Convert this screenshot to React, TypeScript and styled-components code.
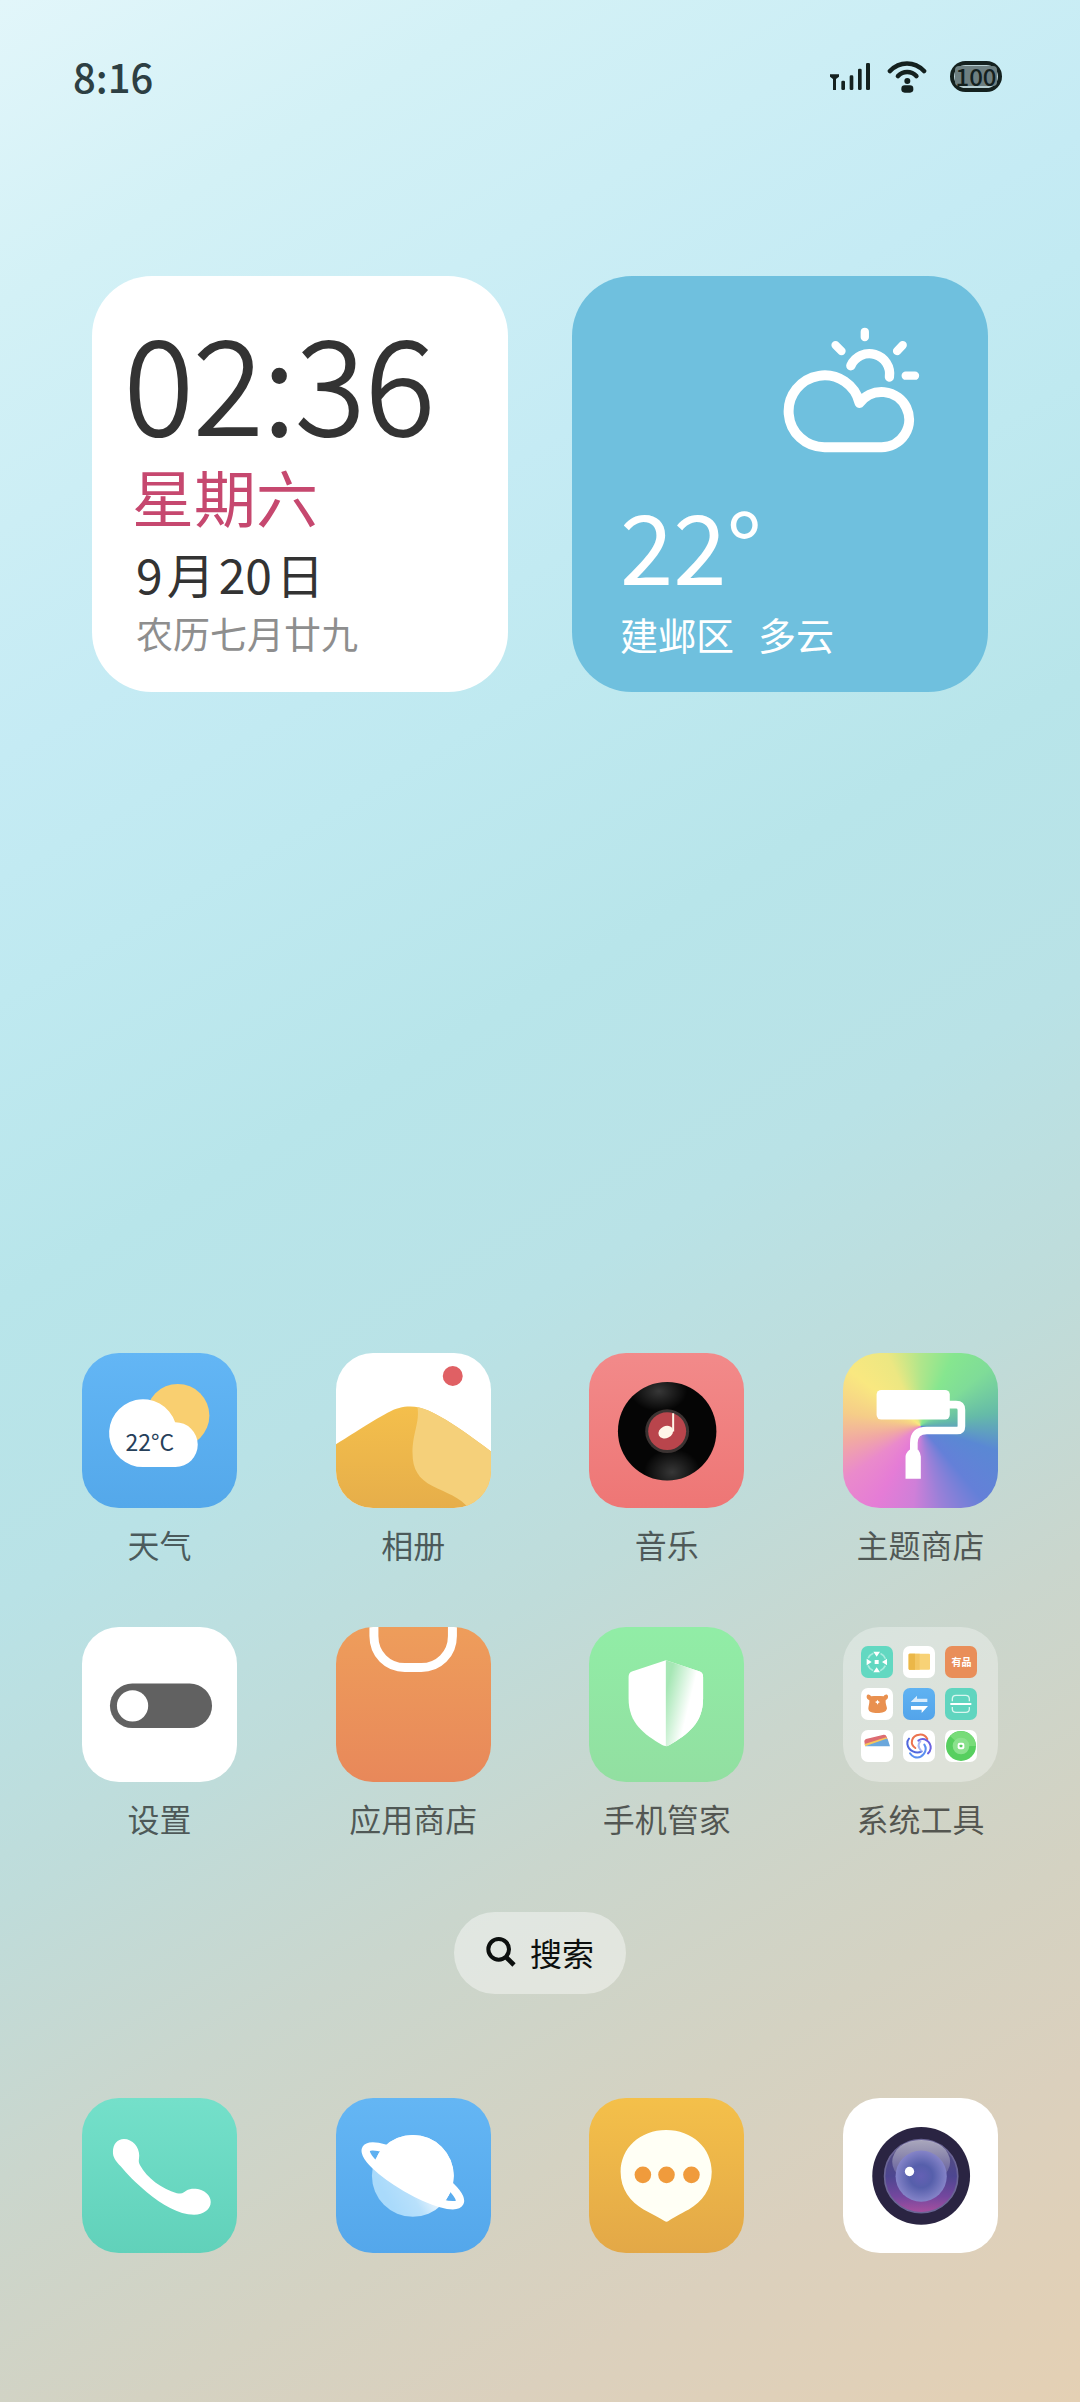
import React from 'react';
import styled, { createGlobalStyle } from 'styled-components';

interface AppEntry {
  id: string;
  name: string;
  background: string;
  icon: React.ReactNode;
}

const GlobalStyle = createGlobalStyle`
  * {
    box-sizing: border-box;
  }

  body {
    margin: 0;
    font-family: 'Noto Sans CJK SC', 'Noto Sans', sans-serif;
  }

  button {
    font: inherit;
    color: inherit;
    border: none;
    background: none;
    padding: 0;
    cursor: pointer;
  }

  svg {
    display: block;
  }
`;

const Screen = styled.div`
  display: flex;
  flex-direction: column;
  min-height: 100vh;
  padding-bottom: 149px;
  background: linear-gradient(
    150deg,
    #e2f6fa 0%,
    #d3f1f6 10%,
    #c5ebf4 25%,
    #bfe9f0 33%,
    #b8e5ea 43%,
    #b9e2e6 53%,
    #bfdcda 63%,
    #cad6cd 72%,
    #d4d2c2 82%,
    #dbd0bd 89%,
    #e4d0b4 100%
  );
`;

const StatusBar = styled.header`
  display: flex;
  align-items: center;
  justify-content: space-between;
  height: 152px;
  padding: 0 78px 0 73px;
  color: #2d3f43;
`;

const StatusTime = styled.span`
  font-size: 40px;
  line-height: 48px;
  font-weight: 500;
`;

const StatusIcons = styled.div`
  display: flex;
  align-items: center;
  gap: 17px;
`;

const Battery = styled.span`
  display: flex;
  align-items: center;
  justify-content: center;
  width: 52px;
  height: 31px;
  margin-left: 6px;
  border: 4px solid #14211f;
  border-radius: 16px;
  background: #b5cdd1;
`;

const BatteryLevel = styled.span`
  border-radius: 4px;
  background: #6d7f81;
  color: #14211f;
  font-size: 24px;
  line-height: 20px;
  font-weight: 500;
`;

const Widgets = styled.section`
  display: grid;
  grid-template-columns: 1fr 1fr;
  gap: 64px;
  padding: 124px 92px 0;
`;

const Widget = styled.article<{ $background: string }>`
  display: flex;
  flex-direction: column;
  aspect-ratio: 1;
  border-radius: 60px;
  overflow: hidden;
  background: ${props => props.$background};
`;

const ClockWidget = styled(Widget)`
  padding: 38px 32px 32px;
  color: #333;
`;

const Clock = styled.div`
  font-size: 130px;
  line-height: 128px;
  font-weight: 300;
  -webkit-text-stroke: 2px #333;
`;

const DateBlock = styled.div`
  display: flex;
  flex-direction: column;
  margin-top: 22px;
  padding-left: 8px;
`;

const Weekday = styled.span`
  font-size: 62px;
  line-height: 64px;
  color: #c6486f;
`;

const MonthDay = styled.span`
  display: flex;
  gap: 4px;
  margin: 17px 0 0 4px;
  font-size: 48px;
  line-height: 56px;
`;

const Lunar = styled.span`
  margin: 8px 0 0 4px;
  font-size: 37px;
  line-height: 48px;
  color: #8e8e8e;
`;

const WeatherWidget = styled(Widget)`
  padding: 51px 68px 34px 48px;
  color: #fff;

  svg {
    align-self: flex-end;
  }
`;

const Temperature = styled.span`
  margin-top: auto;
  font-size: 96px;
  line-height: 96px;
`;

const Place = styled.div`
  display: flex;
  gap: 24px;
  margin-top: 18px;
  font-size: 38px;
  line-height: 48px;
`;

const AppGrid = styled.main`
  display: grid;
  grid-template-columns: repeat(4, 155px);
  justify-content: space-between;
  row-gap: 63px;
  margin-top: auto;
  padding: 0 82px;
`;

const AppButton = styled.button`
  display: flex;
  flex-direction: column;
  align-items: center;
  gap: 16px;
`;

const AppTile = styled.span<{ $background: string }>`
  display: flex;
  align-items: center;
  justify-content: center;
  width: 155px;
  height: 155px;
  border-radius: 37px;
  overflow: hidden;
  background: ${props => props.$background};
`;

const AppLabel = styled.span`
  font-size: 32px;
  line-height: 40px;
  white-space: nowrap;
  color: rgba(0, 0, 0, 0.6);
`;

const FolderGrid = styled.span`
  display: grid;
  grid-template-columns: repeat(3, 32px);
  gap: 10px;
  padding: 0 2px 2px 0;
`;

const MiniTile = styled.span<{ $background: string }>`
  display: flex;
  align-items: center;
  justify-content: center;
  height: 32px;
  border-radius: 7px;
  overflow: hidden;
  background: ${props => props.$background};
  color: #fff;
  font-size: 10px;
  line-height: 12px;
  font-weight: 700;
`;

const SearchButton = styled.button`
  display: flex;
  align-items: center;
  align-self: center;
  gap: 14px;
  height: 82px;
  margin-top: 74px;
  padding: 0 32px 2px;
  border-radius: 41px;
  background: rgba(255, 255, 255, 0.42);
  color: #0c0f0e;
  font-size: 32px;
  line-height: 40px;
`;

const Dock = styled.nav`
  display: flex;
  justify-content: space-between;
  margin-top: 104px;
  padding: 0 82px;
`;

const SignalIcon = () => (
  <svg width="40" height="32" viewBox="0 0 120 96" fill="#14211f">
    <path d="M0 43H27V50L18 57V90H9V57L0 50Z" />
    <rect x="34" y="62" width="11" height="28" rx="4" />
    <rect x="59" y="46" width="11" height="44" rx="4" />
    <rect x="84" y="26" width="11" height="64" rx="4" />
    <rect x="108" y="9" width="12" height="81" rx="4" />
  </svg>
);

const WifiIcon = () => (
  <svg width="40" height="33" viewBox="0 0 120 99" fill="none" stroke="#14211f" strokeLinecap="round">
    <path d="M9 33C38 3 82 3 111 33" strokeWidth="14" />
    <path d="M33 48C48 32 73 32 88 48" strokeWidth="14" />
    <circle cx="61" cy="63" r="9" fill="#14211f" stroke="none" />
    <rect x="43" y="76" width="36" height="22" rx="10" fill="#14211f" stroke="none" />
  </svg>
);

const PartlyCloudyIcon = () => (
  <svg width="137" height="126" viewBox="0 0 412 378" fill="none" stroke="#fff" strokeLinecap="round" strokeLinejoin="round">
    <path d="M125 361A108 108 0 1 1 230 228A83 83 0 1 1 295 361Z" strokeWidth="30" />
    <path d="M204 116A61 61 0 0 1 320 150" strokeWidth="28" />
    <path d="M246 14V30M158 54L176 72M360 54L343 72M369 146H397" strokeWidth="25" />
  </svg>
);

const SearchIcon = () => (
  <svg width="30" height="30" viewBox="0 0 90 90" fill="none" stroke="currentColor" strokeWidth="12">
    <circle cx="38" cy="37" r="31" />
    <path d="M60 60L84 84" strokeWidth="14" />
  </svg>
);

const WeatherIcon = () => (
  <svg width="155" height="155" viewBox="0 0 466 466">
    <circle cx="288" cy="188" r="95" fill="#f9cf70" />
    <path d="M184 343A102 102 0 1 1 280 208A67 67 0 0 1 281 343Z" fill="#fff" />
    <text x="131" y="295" fontSize="69" fill="#26405a">22°C</text>
  </svg>
);

const AlbumIcon = () => (
  <svg width="155" height="155" viewBox="0 0 466 466">
    <defs>
      <linearGradient id="dune" x1="0" y1="0" x2="0" y2="1">
        <stop offset="0" stopColor="#f4bf4c" />
        <stop offset="1" stopColor="#e6ae4a" />
      </linearGradient>
    </defs>
    <circle cx="351" cy="69" r="30" fill="#e06064" />
    <path d="M0 274C30 258 100 209 155 180C180 166 200 161 223 161C260 161 290 178 330 201C370 225 420 262 466 296V466H0Z" fill="url(#dune)" />
    <path d="M245 163C252 210 230 240 230 300C230 350 248 378 290 400C330 420 375 435 397 466H466V296C420 262 370 225 330 201C300 184 275 168 245 163Z" fill="#f5d07a" />
  </svg>
);

const MusicIcon = () => (
  <svg width="155" height="155" viewBox="0 0 466 466">
    <defs>
      <radialGradient id="vinylShine">
        <stop offset="0" stopColor="#fff" stopOpacity="0.2" />
        <stop offset="1" stopColor="#fff" stopOpacity="0" />
      </radialGradient>
      <clipPath id="vinylClip">
        <circle cx="235" cy="235" r="148" />
      </clipPath>
    </defs>
    <circle cx="235" cy="235" r="148" fill="#050505" />
    <g clipPath="url(#vinylClip)">
      <ellipse cx="210" cy="115" rx="85" ry="60" fill="url(#vinylShine)" />
      <ellipse cx="250" cy="358" rx="85" ry="70" fill="url(#vinylShine)" />
    </g>
    <circle cx="235" cy="235" r="66" fill="#3b3332" />
    <circle cx="235" cy="235" r="57" fill="#b9454c" />
    <ellipse cx="231" cy="238" rx="23" ry="18" transform="rotate(-25 231 238)" fill="#fff6e8" />
    <path d="M253 181V236" stroke="#fff6e8" strokeWidth="6" />
  </svg>
);

const ThemeIcon = () => (
  <svg width="155" height="155" viewBox="0 0 466 466">
    <rect x="101" y="111" width="220" height="89" rx="14" fill="#fff" />
    <path d="M318 155H340Q356 155 356 171V220Q356 233 343 233H252Q213 233 213 270V300" fill="none" stroke="#fff" strokeWidth="23" />
    <path d="M188 378V312Q188 302 200 291H226Q234 302 234 312V378Z" fill="#fff" />
  </svg>
);

const SettingsIcon = () => (
  <svg width="155" height="155" viewBox="0 0 466 466">
    <rect x="84" y="170" width="307" height="134" rx="67" fill="#616161" />
    <circle cx="152" cy="237" r="47" fill="#fff" />
  </svg>
);

const StoreIcon = () => (
  <svg width="155" height="155" viewBox="0 0 466 466">
    <path d="M114 0V27C114 82 155 122 207 122H256C308 122 350 82 350 27V0" fill="none" stroke="#fff" strokeWidth="27" />
  </svg>
);

const ShieldIcon = () => (
  <svg width="155" height="155" viewBox="0 0 466 466">
    <defs>
      <linearGradient id="shieldFold" gradientUnits="userSpaceOnUse" x1="231" y1="200" x2="305" y2="218">
        <stop offset="0" stopColor="#a6e7b5" />
        <stop offset="1" stopColor="#fff" />
      </linearGradient>
    </defs>
    <path d="M231 100L129 134Q119 138 119 150V215C119 290 165 322 220 355Q231 361 242 355C297 322 343 290 343 215V150Q343 138 333 134Z" fill="#fff" />
    <path d="M231 100V359Q237 359 242 355C297 322 343 290 343 215V150Q343 138 333 134Z" fill="url(#shieldFold)" />
  </svg>
);

const PhoneIcon = () => (
  <svg width="155" height="155" viewBox="0 0 466 466">
    <path
      d="M93 162C93 138 107 123 126 123C152 123 172 147 172 172C172 186 168 190 175 203C195 240 240 274 285 286C303 290 305 284 313 279C322 273 333 272 342 273C368 275 387 293 387 313C387 335 366 351 337 351C290 350 240 320 195 283C160 254 135 228 117 206C100 187 93 178 93 162Z"
      fill="#fff"
    />
  </svg>
);

const PlanetIcon = () => (
  <svg width="155" height="155" viewBox="0 0 466 466">
    <defs>
      <linearGradient id="planetShade" gradientUnits="userSpaceOnUse" x1="170" y1="330" x2="290" y2="260">
        <stop offset="0" stopColor="#a9dafb" />
        <stop offset="0.5" stopColor="#b8e0fb" />
        <stop offset="1" stopColor="#f4faff" />
      </linearGradient>
      <clipPath id="planetClip">
        <circle cx="231" cy="234" r="123" />
      </clipPath>
    </defs>
    <circle cx="231" cy="234" r="123" fill="url(#planetShade)" />
    <g clipPath="url(#planetClip)">
      <g transform="rotate(30 231 234)">
        <rect x="31" y="84" width="400" height="150" fill="#fff" />
        <ellipse cx="231" cy="234" rx="163" ry="42" fill="#fff" />
      </g>
    </g>
    <ellipse cx="231" cy="234" rx="162" ry="41" transform="rotate(30 231 234)" fill="none" stroke="#fff" strokeWidth="25" />
  </svg>
);

const MessageIcon = () => (
  <svg width="155" height="155" viewBox="0 0 466 466">
    <path
      d="M232 96C310 96 369 150 369 222C369 275 340 312 300 335C275 348 252 360 239 370Q233 374 227 370C212 360 189 348 164 335C124 312 95 275 95 222C95 150 154 96 232 96Z"
      fill="#fffff5"
    />
    <circle cx="162" cy="231" r="25" fill="#f09b3c" />
    <circle cx="233" cy="231" r="25" fill="#f09b3c" />
    <circle cx="308" cy="231" r="25" fill="#f09b3c" />
  </svg>
);

const CameraIcon = () => (
  <svg width="155" height="155" viewBox="0 0 466 466">
    <defs>
      <linearGradient id="lens" x1="0" y1="0" x2="0" y2="1">
        <stop offset="0" stopColor="#55507a" />
        <stop offset="0.5" stopColor="#4d4690" />
        <stop offset="0.78" stopColor="#74479e" />
        <stop offset="1" stopColor="#a8509f" />
      </linearGradient>
      <linearGradient id="glare" x1="0" y1="0" x2="0" y2="1">
        <stop offset="0" stopColor="#fff" stopOpacity="0.5" />
        <stop offset="1" stopColor="#fff" stopOpacity="0.05" />
      </linearGradient>
      <radialGradient id="pupil">
        <stop offset="0" stopColor="#6460b4" />
        <stop offset="0.45" stopColor="#565fab" />
        <stop offset="1" stopColor="#8584c8" />
      </radialGradient>
    </defs>
    <circle cx="235" cy="234" r="147" fill="#2a2442" />
    <circle cx="235" cy="235" r="110" fill="url(#lens)" stroke="#6b6596" strokeWidth="5" />
    <ellipse cx="235" cy="192" rx="87" ry="66" fill="url(#glare)" />
    <circle cx="235" cy="235" r="77" fill="url(#pupil)" />
    <circle cx="200" cy="221" r="14" fill="#fff" />
  </svg>
);

const MiniSvg = ({ children }: { children: React.ReactNode }) => (
  <svg width="32" height="32" viewBox="0 0 96 96">{children}</svg>
);

const FolderIcon = () => (
  <FolderGrid>
    <MiniTile $background="#62d8c1">
      <MiniSvg>
        <circle cx="47" cy="48" r="28" fill="none" stroke="#a9ebde" strokeWidth="5" strokeDasharray="22 22" strokeDashoffset="-11" />
        <path d="M37 17H57L47 32ZM37 79H57L47 64ZM17 38V58L32 48ZM78 38V58L63 48ZM41 42H53V54H41Z" fill="#fff" />
      </MiniSvg>
    </MiniTile>
    <MiniTile $background="#fff">
      <MiniSvg>
        <rect x="17" y="23" width="64" height="48" rx="3" fill="#f8d276" />
        <path d="M20 23H50V71H20Q17 71 17 68V26Q17 23 20 23Z" fill="#f3c662" />
        <path d="M20 23H36V71H20Q17 71 17 68V26Q17 23 20 23Z" fill="#ebb748" />
      </MiniSvg>
    </MiniTile>
    <MiniTile $background="#e98e59">有品</MiniTile>
    <MiniTile $background="#fff">
      <MiniSvg>
        <path
          d="M17 24C18 17 27 18 30 25C42 24 56 24 68 25C71 18 80 17 81 24C82 31 78 34 74 37C73 45 76 52 78 61C76 73 64 75 49 75C34 75 22 73 22 61C23 52 26 45 25 37C20 34 16 31 17 24Z"
          fill="#e9904f"
        />
        <path d="M49 35L52 40L57 42L52 45L50 50L47 45L42 42L47 40Z" fill="#fff" />
      </MiniSvg>
    </MiniTile>
    <MiniTile $background="linear-gradient(#5fb2f2, #53a4ea)">
      <MiniSvg>
        <path d="M23 42L42 23V32H73V42Z" fill="#d9ecfc" />
        <path d="M24 54H75L56 75V65H24Z" fill="#fff" />
      </MiniSvg>
    </MiniTile>
    <MiniTile $background="#60d5bf">
      <MiniSvg>
        <path d="M22 40V33Q22 22 33 22H62Q73 22 73 33V40M22 57V63Q22 73 33 73H62Q73 73 73 63V57" fill="none" stroke="#d8f6ef" strokeWidth="4" />
        <path d="M16 48H79" stroke="#fff" strokeWidth="6" />
      </MiniSvg>
    </MiniTile>
    <MiniTile $background="#fff">
      <MiniSvg>
        <path d="M10 34Q10 29 15 27L68 14Q75 13 77 20L80 28L12 47Z" fill="#dc6b72" />
        <path d="M11 42L76 22L80 30L13 49Z" fill="#f5c65c" />
        <path d="M12 49L74 27Q79 25 81 30L87 49Z" fill="#6aa7dc" />
      </MiniSvg>
    </MiniTile>
    <MiniTile $background="#fff">
      <MiniSvg>
        <g fill="none" strokeWidth="6" strokeLinecap="round">
          <path d="M37 54C20 44 24 16 49 14C60 13 69 19 73 27" stroke="#ec7350" />
          <path d="M46 32C62 20 84 34 83 55C82 62 79 67 75 70" stroke="#6b62e0" />
          <path d="M64 44C76 62 58 88 34 81C28 79 24 75 21 70" stroke="#5a8ff0" />
          <path d="M56 64C40 74 16 62 13 42C12 35 14 30 18 26" stroke="#5168dd" />
          <path d="M52 34C44 42 44 50 54 62" stroke="#a7b6f5" />
        </g>
      </MiniSvg>
    </MiniTile>
    <MiniTile $background="#fff">
      <MiniSvg>
        <circle cx="48" cy="48" r="45" fill="#57cf5f" />
        <path d="M48 48L15 18A45 45 0 0 1 93 48Z" fill="#78dc79" />
        <circle cx="48" cy="48" r="25" fill="#8be18d" />
        <rect x="38" y="38" width="20" height="20" rx="6" fill="#fff" />
        <rect x="44" y="44" width="8" height="8" rx="2" fill="#57cf5f" />
      </MiniSvg>
    </MiniTile>
  </FolderGrid>
);

const themeColors = `conic-gradient(from 0deg at 50% 47%,
  #b0e68b 0deg, #86e68f 25deg, #7fdc98 50deg, #65bba8 80deg, #5a88d4 108deg, #6480d8 140deg,
  #9a80d8 165deg, #cf7fd8 185deg, #e57cd6 210deg, #ea8acb 235deg, #f1a9a3 258deg,
  #f5cd88 280deg, #f9e880 308deg, #ece782 335deg, #b0e68b 360deg)`;

const apps: AppEntry[] = [
  { id: 'weather', name: '天气', background: 'linear-gradient(#63b6f5, #54a8ea)', icon: <WeatherIcon /> },
  { id: 'album', name: '相册', background: '#fff', icon: <AlbumIcon /> },
  { id: 'music', name: '音乐', background: 'linear-gradient(#f28a8a, #ee7675)', icon: <MusicIcon /> },
  { id: 'themes', name: '主题商店', background: themeColors, icon: <ThemeIcon /> },
  { id: 'settings', name: '设置', background: '#fff', icon: <SettingsIcon /> },
  { id: 'store', name: '应用商店', background: 'linear-gradient(#ee9d5b, #e8885a)', icon: <StoreIcon /> },
  { id: 'security', name: '手机管家', background: 'linear-gradient(#91eda6, #92dfa1)', icon: <ShieldIcon /> },
  { id: 'tools', name: '系统工具', background: 'rgba(255, 255, 255, 0.32)', icon: <FolderIcon /> },
];

const dockApps: AppEntry[] = [
  { id: 'phone', name: '电话', background: 'linear-gradient(#74e0ca, #61d1ba)', icon: <PhoneIcon /> },
  { id: 'browser', name: '浏览器', background: 'linear-gradient(#64b6f4, #54a7eb)', icon: <PlanetIcon /> },
  { id: 'messages', name: '短信', background: 'linear-gradient(#f4c04a, #e3a847)', icon: <MessageIcon /> },
  { id: 'camera', name: '相机', background: '#fff', icon: <CameraIcon /> },
];

const App: React.FC = () => {
  return (
    <>
      <GlobalStyle />
      <Screen>
        <StatusBar>
          <StatusTime>8:16</StatusTime>
          <StatusIcons>
            <SignalIcon />
            <WifiIcon />
            <Battery>
              <BatteryLevel>100</BatteryLevel>
            </Battery>
          </StatusIcons>
        </StatusBar>

        <Widgets>
          <ClockWidget $background="#fff">
            <Clock>02:36</Clock>
            <DateBlock>
              <Weekday>星期六</Weekday>
              <MonthDay>
                <span>9</span>
                <span>月</span>
                <span>20</span>
                <span>日</span>
              </MonthDay>
              <Lunar>农历七月廿九</Lunar>
            </DateBlock>
          </ClockWidget>
          <WeatherWidget $background="#6fc0de">
            <PartlyCloudyIcon />
            <Temperature>22°</Temperature>
            <Place>
              <span>建邺区</span>
              <span>多云</span>
            </Place>
          </WeatherWidget>
        </Widgets>

        <AppGrid>
          {apps.map((app) => (
            <AppButton key={app.id} type="button">
              <AppTile $background={app.background}>{app.icon}</AppTile>
              <AppLabel>{app.name}</AppLabel>
            </AppButton>
          ))}
        </AppGrid>

        <SearchButton type="button">
          <SearchIcon />
          搜索
        </SearchButton>

        <Dock>
          {dockApps.map((app) => (
            <AppButton key={app.id} type="button" aria-label={app.name}>
              <AppTile $background={app.background}>{app.icon}</AppTile>
            </AppButton>
          ))}
        </Dock>
      </Screen>
    </>
  );
};

export default App;
